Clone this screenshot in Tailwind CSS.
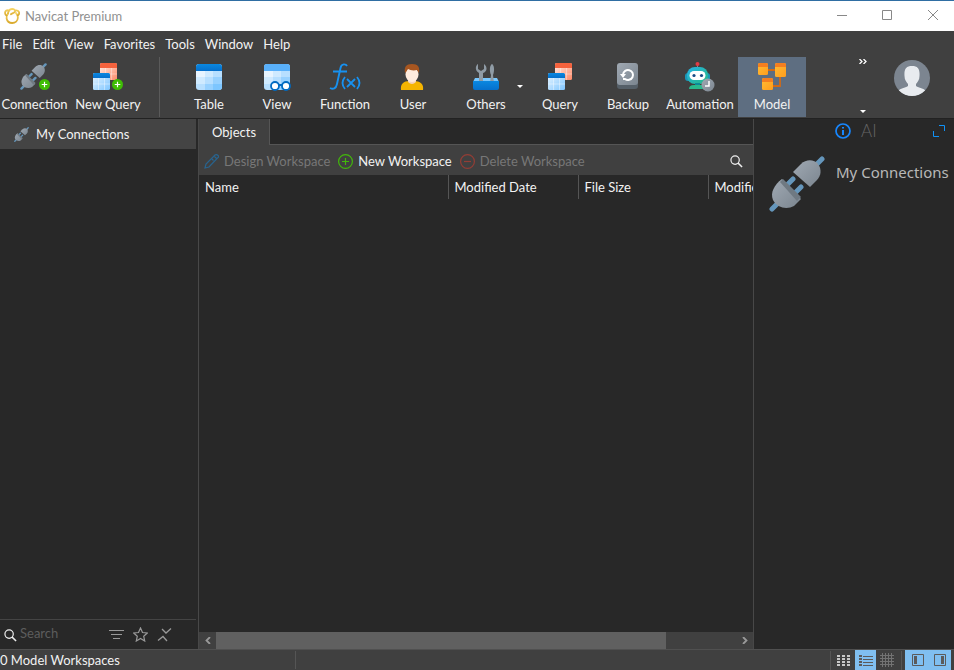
<!DOCTYPE html>
<html lang="en">
<head>
<meta charset="utf-8">
<title>Navicat Premium</title>
<script src="https://cdn.jsdelivr.net/npm/@tailwindcss/browser@4"></script>
</head>
<body class="flex h-screen flex-col overflow-hidden bg-[#282828] font-['Lato','Noto_Sans',sans-serif] text-[13px] leading-4 text-[#f2f2f2]">
<svg class="absolute size-0" aria-hidden="true">
  <defs>
    <linearGradient id="metal" x1="0" y1="0" x2="1" y2="1"><stop offset="0" stop-color="#a0a9b3"/><stop offset="1" stop-color="#7b858f"/></linearGradient>
    <linearGradient id="blue" x1="0" y1="0" x2="0" y2="1"><stop offset="0" stop-color="#0a88e0"/><stop offset="1" stop-color="#0670cc"/></linearGradient>
    <linearGradient id="cells" x1="0" y1="0" x2="1" y2="1"><stop offset="0" stop-color="#eaf6ff"/><stop offset="1" stop-color="#7fc6ff"/></linearGradient>
    <linearGradient id="redcells" x1="0" y1="0" x2="1" y2="1"><stop offset="0" stop-color="#fff0ea"/><stop offset="1" stop-color="#ff8a68"/></linearGradient>
    <linearGradient id="amber" x1="0" y1="0" x2="1" y2="1"><stop offset="0" stop-color="#ffbd35"/><stop offset="1" stop-color="#ff9d1c"/></linearGradient>
    <linearGradient id="gold" x1="0" y1="0" x2="0" y2="1"><stop offset="0" stop-color="#f6d565"/><stop offset="1" stop-color="#d9a92c"/></linearGradient>
    <linearGradient id="teal" x1="0" y1="0" x2="1" y2="1"><stop offset="0" stop-color="#25b4e8"/><stop offset="1" stop-color="#25b982"/></linearGradient>
    <symbol id="plug" viewBox="0 0 56 56">
      <g stroke="#6596bb" stroke-width="5" stroke-linecap="round"><path d="M53 3 46 10M3 53l7-7M24 23l-5 5M32 31l-5 5"/></g>
      <path fill="url(#metal)" d="M24 16l8-8C37 3 45 3 49 8c4 5 3 12-1 16l-7 7z"/>
      <path fill="url(#metal)" d="M13 23C5 29 1 37 4 44c4 8 14 10 21 6l7-7z"/>
      <path fill="#6f7982" d="M14 23l18 18-4 4L11 26z"/>
    </symbol>
    <symbol id="sheets" viewBox="0 0 24 27">
      <rect x="7" width="17" height="17" rx="1.5" fill="url(#redcells)"/><path d="M12.500 5v12M18.500 5v12M7 11h17" stroke="#fff" stroke-opacity=".35"/>
      <path d="M7 5V1.500A1.500 1.500 0 0 1 8.500 0h14A1.500 1.500 0 0 1 24 1.500V5z" fill="#f5623d"/>
      <rect y="10" width="17" height="17" rx="1.500" fill="url(#cells)"/><path d="M5.500 15v12M11.500 15v12M0 21h17" stroke="#fff" stroke-opacity=".4"/>
      <path d="M0 15v-3.500A1.500 1.500 0 0 1 1.500 10h14a1.500 1.500 0 0 1 1.500 1.500V15z" fill="url(#blue)"/>
    </symbol>
    <symbol id="plus" viewBox="0 0 12 12"><circle cx="6" cy="6" r="6" fill="#3fbd05"/><path d="M6 3v6M3 6h6" stroke="#fff" stroke-width="1.300"/></symbol>
    <symbol id="lens" viewBox="0 0 14 14"><circle cx="5.500" cy="5.500" r="4.500" fill="none" stroke="#eee" stroke-width="1.300"/><path d="M8.500 8.500 13 13" stroke="#eee" stroke-width="1.600"/></symbol>
    <symbol id="cellbody" viewBox="0 0 26 26">
      <rect width="26" height="26" rx="3" fill="#b7dfff"/><path d="M0 7h9v6H0z" fill="#e7f4ff"/><path d="M9 7h8v6H9zM0 13h9v7H0z" fill="#cfeaff"/><path d="M17 13h9v7h-9zM9 20h8v6H9z" fill="#97d1ff"/><path d="M17 20h9v3a3 3 0 0 1-3 3h-6z" fill="#7dc6ff"/>
    </symbol>
  </defs>
</svg>

<header class="flex h-[31px] shrink-0 items-center border-t border-[#2f6ea3] bg-white text-[#909090]">
  <svg class="ml-1 size-4" viewBox="0 0 16 16" fill="none" stroke="url(#gold)" stroke-width="1.800" stroke-linecap="round" aria-hidden="true"><path d="M4 5.500C2.500 7 2.300 9 2.600 10.500 3.200 13.300 5.500 15 8.200 15c3 0 5.500-2.300 5.700-5.200.1-2-.7-3.600-1.900-4.800"/><path d="M2.500 7.500C.8 6.500.6 4 2 2.800c1-.8 2.300-.5 3 .3M4 5.500C4.200 3 5.500 1.200 8 1c2-.1 3.500 1 3 2.500C10.500 5 8 5 7 6.200M11 2.500c2-.7 4 .5 4.200 2.300.1 1.300-.6 2.200-1.500 2.500"/></svg>
  <h1 class="ml-[5px] flex-1">Navicat Premium</h1>
  <button aria-label="Minimize" class="flex h-full w-[45px] items-center justify-center"><svg class="h-3 w-3" viewBox="0 0 12 12" stroke="#888"><path d="M0 5.500h10"/></svg></button>
  <button aria-label="Maximize" class="flex h-full w-[45px] items-center justify-center"><svg class="h-3 w-3" viewBox="0 0 12 12" stroke="#888" fill="none"><path d="M.5.5h9v9h-9z"/></svg></button>
  <button aria-label="Close" class="flex h-full w-11 items-center justify-center"><svg class="h-3 w-3" viewBox="0 0 12 12" stroke="#888"><path d="M2 0l10 10M12 0 2 10"/></svg></button>
</header>

<div class="flex h-[88px] shrink-0 border-b border-[#222] bg-[#404040]">
  <div class="flex min-w-0 flex-1 flex-col">
    <nav class="flex h-[26px] shrink-0 items-center gap-2.5 pl-0.5">
      <a href="#">File</a><a href="#">Edit</a><a href="#">View</a><a href="#">Favorites</a><a href="#">Tools</a><a href="#">Window</a><a href="#">Help</a>
    </nav>
    <div class="flex h-[60px] items-stretch whitespace-nowrap">
      <button class="flex w-[69px] shrink-0 flex-col items-center gap-[5px] pt-1.5"><svg class="h-7 w-[32px]" viewBox="0 0 32 28"><use href="#plug" x="1" width="27" height="27"/><use href="#plus" x="20" y="16" width="11" height="11"/></svg>Connection</button>
      <button class="ml-[5px] flex w-[68px] shrink-0 flex-col items-center gap-[5px] pt-1.5"><svg class="h-7 w-[30px]" viewBox="0 0 30 28"><use href="#sheets" width="24" height="27"/><use href="#plus" x="19" y="16" width="11" height="11"/></svg>New Query</button>
      <div class="ml-[17px] mr-[15px] w-px bg-[#5a5a5a]"></div>
      <button class="flex w-[68px] shrink-0 flex-col items-center gap-[5px] pt-1.5"><svg class="size-7" viewBox="0 0 28 28"><use href="#cellbody" x="1" y="1" width="26" height="26"/><path d="M1 8V4a3 3 0 0 1 3-3h20a3 3 0 0 1 3 3v4z" fill="url(#blue)"/></svg>Table</button>
      <button class="flex w-[68px] shrink-0 flex-col items-center gap-[5px] pt-1.5"><svg class="size-7" viewBox="0 0 28 28"><use href="#cellbody" x="1" y="1" width="26" height="26"/><path d="M1 8V4a3 3 0 0 1 3-3h20a3 3 0 0 1 3 3v4z" fill="#59b0fa"/><path d="M16 22h3" stroke="#006bc2" stroke-width="2"/><circle cx="12" cy="23" r="4" fill="#fff" stroke="#006bc2" stroke-width="1.800"/><circle cx="23" cy="23" r="4" fill="#fff" stroke="#006bc2" stroke-width="1.800"/></svg>View</button>
      <button class="flex w-[68px] shrink-0 flex-col items-center gap-[5px] pt-1.5"><svg class="h-7 w-8" viewBox="0 0 32 28" fill="none" stroke="#1791f0" stroke-width="1.900"><path d="M18 3C17 1 12.500 0 11.500 5L8 21c-1 5-4 5.500-7 4M4 8.500h14"/><path d="M16 14q-5 6 0 12M28 14q5 6 0 12M18 16l8 8M26 16l-8 8" stroke-width="1.800"/></svg>Function</button>
      <button class="flex w-[68px] shrink-0 flex-col items-center gap-[5px] pt-1.5"><svg class="size-7" viewBox="0 0 28 28"><path d="M2 27c-1-6 3-9 8-9h5c6 0 10 3 9 9z" fill="#f5b400"/><path d="M9 16h8v3q-4 4-8 0z" fill="#f4d3bd"/><ellipse cx="13" cy="11.500" rx="6.500" ry="7.500" fill="#ffebdd"/><path d="M6 10c-1-6 1-9 7-9s8 3 7 9l-2-3c-4 1-7 0-9-1-1 1-1 2-3 4z" fill="#a75620"/></svg>User</button>
      <button class="relative flex w-[78px] shrink-0 flex-col items-center gap-[5px] pt-1.5"><svg class="size-7" viewBox="0 0 28 28"><path d="M1 19l2-4h22l2 4z" fill="#7ac8ff"/><path d="M7 20V10C2 7 4 2 6 1v5l3 2 3-2V1c4 3 3 8-1 9v10zM18 20l1-8c-2-5-1-10 1-11 2 1 3 6 1 11l1 8z" fill="#8f9ba5"/><path d="M1 18h26v7q0 2-2 2H3q-2 0-2-2z" fill="url(#blue)"/></svg>Others<svg class="absolute right-0.5 top-[28px] h-[3px] w-[6px]" viewBox="0 0 6 3" fill="#fff"><path d="M0 0h6L3 3z"/></svg></button>
      <button class="ml-px flex w-[68px] shrink-0 flex-col items-center gap-[5px] pt-1.5"><svg class="h-7 w-6" viewBox="0 0 24 28"><use href="#sheets" width="24" height="27"/></svg>Query</button>
      <button class="flex w-[68px] shrink-0 flex-col items-center gap-[5px] pt-1.5"><svg class="size-7" viewBox="0 0 28 28"><rect x="3" y="5" width="21" height="21" rx="3" fill="#555f68"/><rect x="3" width="21" height="22" rx="3" fill="url(#metal)"/><path d="M9 11.500a5 5 0 1 1 2 4.500h-2" fill="none" stroke="#fff" stroke-width="2"/><path d="M6 11h6l-3 4z" fill="#fff"/></svg>Backup</button>
      <button class="flex w-[76px] shrink-0 flex-col items-center gap-[5px] pt-1.5"><svg class="h-7 w-[30px]" viewBox="0 0 30 28" overflow="visible"><path d="M12.500 1v5" stroke="#808e9a"/><circle cx="12.500" cy="1" r="2" fill="#e13b45"/><rect y="10" width="25" height="8" rx="3" fill="#1a96b7"/><rect x="2" y="4" width="21" height="17" rx="8" fill="url(#teal)"/><rect x="4.500" y="8" width="16" height="9" rx="4.500" fill="#fff"/><circle cx="9" cy="12.500" r="1.600" fill="#174b86"/><circle cx="16.500" cy="12.500" r="1.600" fill="#174b86"/><path d="M10 20h5v2h-5z" fill="#0b8a9a"/><path d="M4 26q0-4 5-4h7q5 0 5 4z" fill="#29b98d"/><circle cx="23" cy="22" r="6.500" fill="url(#metal)"/><path d="M24 18v5h-4" fill="none" stroke="#fff" stroke-width="1.500"/></svg>Automation</button>
      <button aria-pressed="true" class="flex w-[68px] shrink-0 flex-col items-center gap-[5px] bg-[#5e6e81] pt-1.5"><svg class="size-7" viewBox="0 0 28 28"><path d="M10 7h8M22 13v10h-8" fill="none" stroke="#d16a16" stroke-width="1.800"/><rect width="10" height="12" rx="1.500" fill="url(#amber)"/><rect x="17" width="11" height="14" rx="1.500" fill="url(#amber)"/><rect x="4" y="15" width="11" height="12" rx="1.500" fill="url(#amber)"/><path d="M0 4V2q0-2 2-2h6q2 0 2 2v2zM17 4V2q0-2 2-2h7q2 0 2 2v2zM4 19v-2q0-2 2-2h7q2 0 2 2v2z" fill="#f47e20"/></svg>Model</button>
    </div>
  </div>
  <div class="flex w-[31px] shrink-0 flex-col items-center justify-between pb-[5px] pt-7">
    <button aria-label="More tools"><svg class="h-[5px] w-2" viewBox="0 0 8 5" fill="none" stroke="#fff" stroke-width="1.300"><path d="M.5 0 3 2.500.5 5M4.500 0 7 2.500 4.500 5"/></svg></button>
    <button aria-label="Toolbar menu"><svg class="h-[3px] w-[6px]" viewBox="0 0 6 3" fill="#fff"><path d="M0 0h6L3 3z"/></svg></button>
  </div>
  <button aria-label="Account" class="ml-4 mr-6 mt-[29px] size-9 shrink-0 self-start overflow-hidden rounded-full bg-[#7c8590]"><svg viewBox="0 0 36 36" fill="#e8ebef"><path d="M18 6c-6 0-8 3-7.500 10 0 4 2 6 3.500 8v2c-3 2-8 2-9.500 5 7 7 20 7 27 0-1.500-3-6.500-3-9.500-5v-2c1.500-2 3.500-4 3.500-8C26 9 24 6 18 6z"/></svg></button>
</div>

<main class="flex min-h-0 flex-1">
  <aside class="mr-0.5 flex w-[196px] shrink-0 flex-col">
    <button class="flex h-[30px] items-center gap-[7px] bg-[#444] pl-[14px]"><svg class="size-[15px]" aria-hidden="true"><use href="#plug"/></svg>My Connections</button>
    <div class="flex-1"></div>
    <div class="flex h-[30px] items-center border-t border-[#444]">
      <label for="search" class="ml-1 mt-0.5"><svg class="size-[13px]" aria-hidden="true"><use href="#lens"/></svg></label>
      <input id="search" type="text" placeholder="Search" aria-label="Search" class="ml-[3px] h-5 min-w-0 flex-1 bg-transparent pb-1 outline-none placeholder:text-[#5d5d5d]">
      <div class="mr-6 flex items-center gap-[9px]">
        <button aria-label="Filter"><svg class="h-[14px] w-[15px]" viewBox="0 0 15 14" stroke="#999"><path d="M0 2.500h15M2 6.500h11M4 10.500h7"/></svg></button>
        <button aria-label="Favorites"><svg class="size-[15px]" viewBox="0 0 15 15" fill="none" stroke="#999" stroke-width="1.200"><path d="M7.500 1l2 4.500 4.800.5-3.600 3.200 1 4.800-4.200-2.500L3.300 14l1-4.800L.7 6l4.800-.5z"/></svg></button>
        <button aria-label="Collapse all"><svg class="h-[14px] w-[15px]" viewBox="0 0 15 14" fill="none" stroke="#999" stroke-width="1.300"><path d="M5 1l4 4L14 .5M1 12.500 6 8.500l4 4.500"/></svg></button>
      </div>
    </div>
  </aside>

  <section class="flex min-w-0 flex-1 flex-col border-x border-[#484848]">
    <div class="flex h-[26px] shrink-0 border-b border-[#555]">
      <button class="-mb-px h-[26px] w-[71px] border-r border-[#555] bg-[#404040]">Objects</button>
    </div>
    <div class="flex h-[30px] shrink-0 items-center bg-[#404040] pt-0.5">
      <button disabled class="ml-[5px] flex items-center gap-[5px] text-[#777]"><svg class="size-[15px]" viewBox="0 0 15 15" fill="none" stroke="#28648f" stroke-width="1.200"><path d="M1 14l1-4L11 1q1.500-1 3 .5T13.500 4L5 13zM10 2l3 3M8 5l1.500 1.500"/></svg>Design Workspace</button>
      <button class="ml-2 flex items-center gap-[5px]"><svg class="size-[15px]" viewBox="0 0 15 15" fill="none" stroke="#42b80b" stroke-width="1.200"><circle cx="7.500" cy="7.500" r="6.900"/><path d="M7.500 4v7M4 7.500h7"/></svg>New Workspace</button>
      <button disabled class="ml-2 flex items-center gap-[5px] text-[#777]"><svg class="size-[15px]" viewBox="0 0 15 15" fill="none" stroke="#943d35" stroke-width="1.200"><circle cx="7.500" cy="7.500" r="6.900"/><path d="M4 7.500h7"/></svg>Delete Workspace</button>
      <button aria-label="Find" class="ml-auto mr-[10px]"><svg class="size-[13px]"><use href="#lens"/></svg></button>
    </div>
    <div class="flex-1 overflow-hidden">
      <table class="w-[639px] table-fixed text-left">
        <thead><tr class="h-6 whitespace-nowrap">
          <th class="w-[249px] pl-1.5 font-normal">Name</th>
          <th class="w-[130px] border-l border-[#555] pl-1.5 font-normal">Modified Date</th>
          <th class="w-[130px] border-l border-[#555] pl-1.5 font-normal">File Size</th>
          <th class="border-l border-[#555] pl-1.5 font-normal">Modified By</th>
        </tr></thead>
      </table>
    </div>
    <div class="flex h-[17px] shrink-0 bg-[#404040]">
      <button aria-label="Scroll left" class="flex w-[17px] items-center justify-center"><svg class="h-[7px] w-[6px]" viewBox="0 0 6 7" fill="none" stroke="#999" stroke-width="1.800"><path d="M5 0 1.500 3.500 5 7"/></svg></button>
      <div class="flex-1"><div class="h-full w-[86.500%] bg-[#606060]"></div></div>
      <button aria-label="Scroll right" class="flex w-[17px] items-center justify-center"><svg class="h-[7px] w-[6px]" viewBox="0 0 6 7" fill="none" stroke="#999" stroke-width="1.800"><path d="M1 0l3.500 3.500L1 7"/></svg></button>
    </div>
  </section>

  <aside class="w-[200px] shrink-0">
    <div class="flex h-6 items-center pl-[81px] pr-[9px]">
      <button aria-label="Information"><svg class="size-4" viewBox="0 0 16 16"><circle cx="8" cy="8" r="7" fill="none" stroke="#1787ff" stroke-width="1.700"/><path d="M7 4h2v1.500H7zM7 7h2v5H7z" fill="#1787ff"/></svg></button>
      <button class="ml-2.5 text-[17px] font-light text-[#666]">AI</button>
      <button aria-label="Expand" class="ml-auto"><svg class="size-3" viewBox="0 0 12 12" fill="none" stroke="#1091f5"><path d="M6 .5h5.500V6M.5 6v5.500H6"/></svg></button>
    </div>
    <div class="flex pl-[15px] pt-[13px]">
      <svg class="size-14 shrink-0" aria-hidden="true"><use href="#plug"/></svg>
      <h2 class="ml-[11px] mt-1.5 whitespace-nowrap font-['Noto_Sans',sans-serif] text-[15px] leading-5 text-[#b8b8b8]">My Connections</h2>
    </div>
  </aside>
</main>

<footer class="flex h-[21px] shrink-0 items-stretch border-t border-[#505050] bg-[#404040]">
  <div class="my-px flex w-[296px] items-center border-r border-[#555]">0 Model Workspaces</div>
  <div class="flex-1"></div>
  <div class="mt-px w-px bg-[#555]"></div>
  <button aria-label="Icon view" class="flex w-6 items-center justify-center"><svg class="h-[11px] w-[13px]" viewBox="0 0 13 11" fill="#c8c8c8"><path d="M0 0h3v2H0zM5 0h3v2H5zM10 0h3v2h-3zM0 3h3v2H0zM5 3h3v2H5zM10 3h3v2h-3zM0 6h3v2H0zM5 6h3v2H5zM10 6h3v2h-3zM0 9h3v2H0zM5 9h3v2H5zM10 9h3v2h-3z"/></svg></button>
  <button aria-label="List view" aria-pressed="true" class="flex w-[21px] items-center justify-center bg-[#80bff0]"><svg class="h-[11px] w-[14px]" viewBox="0 0 14 11" fill="#5b5b5b"><path d="M0 0h3v2H0zM4 1h10v1H4zM0 3h3v2H0zM4 4h10v1H4zM0 6h3v2H0zM4 7h10v1H4zM0 9h3v2H0zM4 10h10v1H4z"/></svg></button>
  <button aria-label="Diagram view" class="flex w-[21px] items-center justify-center"><svg class="size-[14px]" viewBox="0 0 14 14" stroke="#737373"><path d="M2.500 0v14M5.500 0v14M8.500 0v14M11.500 0v14M0 2.500h14M0 5.500h14M0 8.500h14M0 11.500h14"/></svg></button>
  <div class="ml-1 mr-[3px] mt-px w-px bg-[#555]"></div>
  <button aria-label="Left pane" class="flex w-[23px] items-center justify-center bg-[#80bff0] pl-[3px]"><svg class="size-3" viewBox="0 0 12 12"><path d="M.5.5h11v11H.5z" fill="none" stroke="#5b5b5b"/><path d="M2 2h3v8H2z" fill="#5b5b5b"/></svg></button>
  <button aria-label="Right pane" class="mr-[3px] flex w-[23px] items-center justify-center bg-[#80bff0]"><svg class="size-3" viewBox="0 0 12 12"><path d="M.5.5h11v11H.5z" fill="none" stroke="#5b5b5b"/><path d="M7 2h3v8H7z" fill="#5b5b5b"/></svg></button>
</footer>
</body>
</html>
